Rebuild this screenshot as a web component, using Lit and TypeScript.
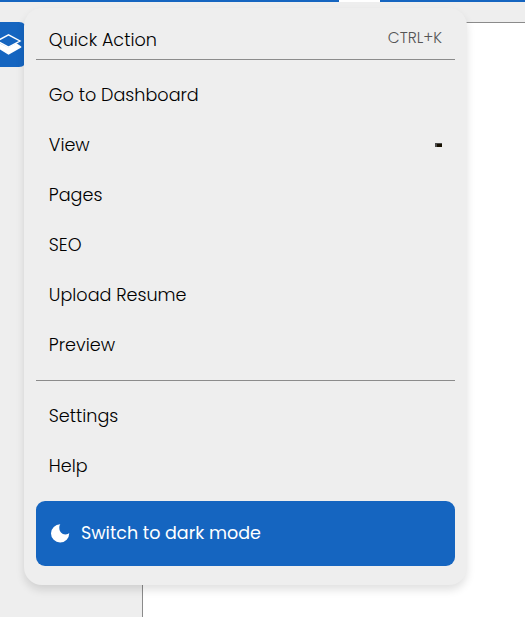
import { LitElement, html, css } from "lit";
import { customElement } from "lit/decorators.js";

interface Entry {
  label: string;
  glyph?: boolean;
}

const PRIMARY: Entry[] = [
  { label: "Go to Dashboard" },
  { label: "View", glyph: true },
  { label: "Pages" },
  { label: "SEO" },
  { label: "Upload Resume" },
  { label: "Preview" },
];

const SECONDARY: Entry[] = [{ label: "Settings" }, { label: "Help" }];

@customElement("quick-menu")
export class QuickMenu extends LitElement {
  static styles = css`
    :host {
      display: block;
      box-sizing: border-box;
      width: 443px;
      height: 577px;
      padding: 12px 12px 19px;
      border-radius: 18px;
      background: #eeeeee;
      box-shadow: 0 5px 9px rgba(0, 0, 0, 0.12);
      color: #000;
      font: 300 17.6px/26px Poppins, Inter, sans-serif;
      white-space: nowrap;
    }
    .header {
      display: flex;
      justify-content: space-between;
      align-items: center;
      box-sizing: border-box;
      height: 40px;
      padding: 0 13px 0 12.8px;
      border-bottom: 1px solid #8b8b8b;
    }
    .group {
      padding: 10px 0;
    }
    .group + .group {
      border-top: 1px solid #8b8b8b;
    }
    .item {
      display: flex;
      align-items: center;
      justify-content: space-between;
      height: 50px;
      padding: 0 13px 0 12.8px;
    }
    .shortcut {
      color: #555;
      font-size: 15.4px;
      padding-bottom: 3px;
    }
    .mode {
      display: flex;
      align-items: center;
      gap: 11px;
      height: 65px;
      box-sizing: border-box;
      padding-left: 15px;
      border-radius: 9px;
      background: #1565c0;
      color: #fff;
      font-size: 17.5px;
      font-weight: 400;
    }
    .switch {
      padding-bottom: 2px;
    }
    .mark {
      display: block;
    }
  `;

  private row(e: Entry) {
    return html`<div class="item">
      <span>${e.label}</span>
      ${e.glyph
        ? html`<svg class="mark" width="7" height="4" viewBox="0 0 7 4" shape-rendering="crispEdges">
            <path fill="#4b4b4b" d="M0 0h7v4H0z" />
            <path fill="#171000" d="M2 1h5v3H2z" />
          </svg>`
        : ""}
    </div>`;
  }

  render() {
    return html`
      <div class="header">
        <span>Quick Action</span>
        <span class="shortcut">CTRL+K</span>
      </div>
      <div class="group">${PRIMARY.map((e) => this.row(e))}</div>
      <div class="group">${SECONDARY.map((e) => this.row(e))}</div>
      <div class="mode">
        <svg width="19" height="19" viewBox="0 0 19 19">
          <path
            fill="#fff"
            d="M9.3 0.3C8.6 1 8.3 2.3 8.3 3.8C8.3 7.6 10.9 10.5 14.4 10.5C16.3 10.5 17.6 9.9 18.2 9.1A9.1 9.1 0 1 1 9.3 0.3Z"
          />
        </svg>
        <span class="switch">Switch to dark mode</span>
      </div>
    `;
  }
}

@customElement("app-root")
export class AppRoot extends LitElement {
  static styles = css`
    :host {
      display: flex;
      flex-direction: column;
      position: relative;
      height: 617px;
      overflow: hidden;
      background: #eeeeee;
    }
    .strip {
      display: flex;
      height: 2px;
      background: #1565c0;
    }
    .tab {
      width: 41px;
      margin-left: 339px;
      background: #fff;
    }
    .body {
      display: flex;
      flex: 1;
      padding-top: 20px;
    }
    .rail {
      width: 142px;
    }
    .badge {
      display: flex;
      align-items: center;
      width: 27px;
      height: 45px;
      border-radius: 0 8px 8px 0;
      background: #1565c0;
    }
    .canvas {
      flex: 1;
      border: solid #8b8b8b;
      border-width: 1px 0 0 1px;
      background: #fff;
    }
    quick-menu {
      position: absolute;
      left: 24px;
      top: 8px;
    }
  `;

  render() {
    return html`
      <div class="strip"><div class="tab"></div></div>
      <div class="body">
        <div class="rail">
          <div class="badge">
            <svg width="22" height="23" viewBox="0 0 22 23">
              <path fill="none" stroke="#fff" stroke-width="1.4" d="M-3 8L8.5 1.8L20 8L8.5 14.2Z" />
              <path fill="#fff" d="M-4 14L-1 10L8.5 14.4L16.5 10.2L21.3 13.6V14.6L8.5 21.8Z" />
            </svg>
          </div>
        </div>
        <div class="canvas"></div>
      </div>
      <quick-menu></quick-menu>
    `;
  }
}
